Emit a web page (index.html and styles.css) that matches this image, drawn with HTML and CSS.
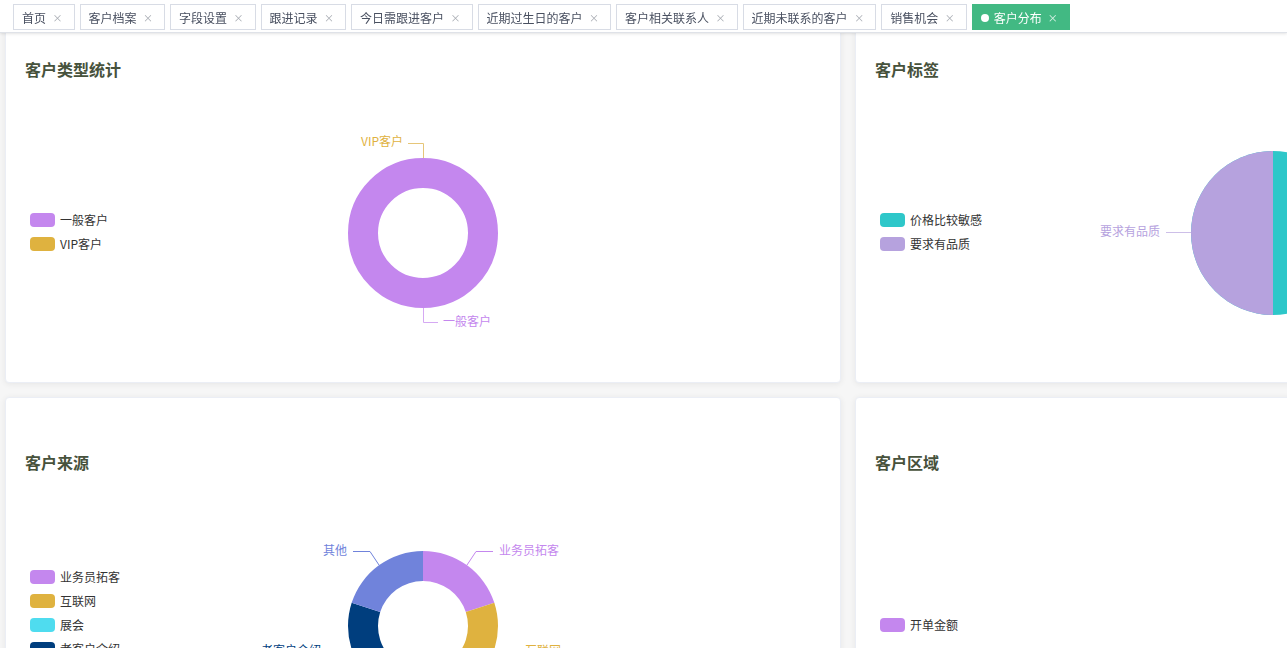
FILE: index.html
```html
<!DOCTYPE html>
<html lang="zh-CN">
<head>
<meta charset="utf-8">
<title>客户分布</title>
<link rel="stylesheet" href="styles.css">
</head>
<body>
<div class="tags-bar">
  <span class="tag">首页<i class="close">×</i></span>
  <span class="tag">客户档案<i class="close">×</i></span>
  <span class="tag">字段设置<i class="close">×</i></span>
  <span class="tag">跟进记录<i class="close">×</i></span>
  <span class="tag">今日需跟进客户<i class="close">×</i></span>
  <span class="tag">近期过生日的客户<i class="close">×</i></span>
  <span class="tag">客户相关联系人<i class="close">×</i></span>
  <span class="tag">近期未联系的客户<i class="close">×</i></span>
  <span class="tag">销售机会<i class="close">×</i></span>
  <span class="tag active"><b class="dot"></b>客户分布<i class="close">×</i></span>
</div>

<main class="main">
  <section class="card">
    <h2 class="card-title">客户类型统计</h2>
    <div class="chart">
      <svg class="chart-svg" viewBox="0 0 834 302" width="834" height="302">
        <circle cx="417" cy="153" r="60" fill="none" stroke="#c487ee" stroke-width="30"/>
        <polyline points="402,63.5 417.5,63.5 417.5,78" fill="none" stroke="#e6c679" stroke-width="1"/>
        <text x="397" y="60.5" text-anchor="end" class="lbl" fill="#dfb23f">VIP客户</text>
        <polyline points="417.5,228 417.5,242.5 432,242.5" fill="none" stroke="#d5a9f3" stroke-width="1"/>
        <text x="437" y="240.5" class="lbl" fill="#c487ee">一般客户</text>
      </svg>
      <ul class="legend">
        <li><span class="sw c-purple"></span>一般客户</li>
        <li><span class="sw c-gold"></span>VIP客户</li>
      </ul>
    </div>
  </section>

  <section class="card">
    <h2 class="card-title">客户标签</h2>
    <div class="chart">
      <svg class="chart-svg" viewBox="0 0 834 302" width="834" height="302">
        <circle cx="417" cy="153" r="82" fill="#2ec7c9"/>
        <path d="M417,71 A82,82 0 0 0 417,235 Z" fill="#b6a2de"/>
        <line x1="310" y1="152.5" x2="335" y2="152.5" stroke="#cdbfe8" stroke-width="1"/>
        <text x="304" y="150.5" text-anchor="end" class="lbl" fill="#b6a2de">要求有品质</text>
      </svg>
      <ul class="legend">
        <li><span class="sw c-teal"></span>价格比较敏感</li>
        <li><span class="sw c-lav"></span>要求有品质</li>
      </ul>
    </div>
  </section>

  <section class="card">
    <h2 class="card-title">客户来源</h2>
    <div class="chart">
      <svg class="chart-svg" viewBox="0 0 834 302" width="834" height="302">
        <path d="M417,78 A75,75 0 0 1 488.33,129.82 L459.80,139.09 A45,45 0 0 0 417,108 Z" fill="#c487ee"/>
        <path d="M488.33,129.82 A75,75 0 0 1 461.08,213.68 L443.45,189.41 A45,45 0 0 0 459.80,139.09 Z" fill="#dfb23f"/>
        <path d="M461.08,213.68 A75,75 0 0 1 372.92,213.68 L390.55,189.41 A45,45 0 0 0 443.45,189.41 Z" fill="#4fdcef"/>
        <path d="M372.92,213.68 A75,75 0 0 1 345.67,129.82 L374.20,139.09 A45,45 0 0 0 390.55,189.41 Z" fill="#003e7e"/>
        <path d="M345.67,129.82 A75,75 0 0 1 417,78 L417,108 A45,45 0 0 0 374.20,139.09 Z" fill="#7083db"/>

        <polyline points="461,92 470,78.5 487,78.5" fill="none" stroke="#c487ee" stroke-width="1"/>
        <text x="493" y="76.5" class="lbl" fill="#c487ee">业务员拓客</text>
        <polyline points="373,92 364,78.5 347,78.5" fill="none" stroke="#7083db" stroke-width="1"/>
        <text x="341" y="76.5" text-anchor="end" class="lbl" fill="#7083db">其他</text>
        <polyline points="488,176 498,178.5 513,178.5" fill="none" stroke="#dfb23f" stroke-width="1"/>
        <text x="519" y="176.5" class="lbl" fill="#dfb23f">互联网</text>
        <polyline points="346,176 336,178.5 321,178.5" fill="none" stroke="#003e7e" stroke-width="1"/>
        <text x="315" y="176.5" text-anchor="end" class="lbl" fill="#003e7e">老客户介绍</text>
        <polyline points="417.5,228 417.5,243 432,243" fill="none" stroke="#4fdcef" stroke-width="1"/>
        <text x="437" y="241.5" class="lbl" fill="#4fdcef">展会</text>
      </svg>
      <ul class="legend">
        <li><span class="sw c-purple"></span>业务员拓客</li>
        <li><span class="sw c-gold"></span>互联网</li>
        <li><span class="sw c-cyan"></span>展会</li>
        <li><span class="sw c-navy"></span>老客户介绍</li>
        <li><span class="sw c-blue"></span>其他</li>
      </ul>
    </div>
  </section>

  <section class="card">
    <h2 class="card-title">客户区域</h2>
    <div class="chart">
      <ul class="legend">
        <li><span class="sw c-purple"></span>开单金额</li>
      </ul>
    </div>
  </section>
</main>
</body>
</html>
```

FILE: styles.css
```css
html, body {
  margin: 0;
  padding: 0;
  overflow: hidden;
  height: 100%;
}
body {
  background: #f6f6f6;
  font-family: "Microsoft YaHei", "Noto Sans CJK SC", sans-serif;
  color: #333;
}

.tags-bar {
  position: fixed;
  top: 0;
  left: 0;
  right: 0;
  z-index: 10;
  height: 33px;
  box-sizing: border-box;
  background: #fff;
  border-bottom: 1px solid #dfe2e8;
  box-shadow: 0 1px 3px 0 rgba(0, 0, 0, 0.10), 0 0 3px 0 rgba(0, 0, 0, 0.04);
  display: flex;
  align-items: flex-start;
  gap: 5px;
  padding: 4px 0 0 13px;
}
.tag {
  display: inline-flex;
  align-items: center;
  height: 26px;
  box-sizing: border-box;
  border: 1px solid #d8dce5;
  background: #fff;
  color: #495060;
  font-size: 12px;
  line-height: 22px;
  padding: 2px 8px 0;
  white-space: nowrap;
}
.tag .close {
  font-style: normal;
  display: inline-block;
  width: 16px;
  margin-left: 3.5px;
  text-align: center;
  font-size: 10px;
  color: #a8acb3;
}
.tag.active {
  background: #42b983;
  border-color: #42b983;
  color: #fff;
}
.tag.active .close {
  margin-left: 3px;
  color: #dff3ea;
}
.dot {
  display: inline-block;
  width: 8px;
  height: 8px;
  border-radius: 50%;
  background: #fff;
  margin-right: 5px;
}

.main {
  display: grid;
  grid-template-columns: 836px 836px;
  grid-auto-rows: 379px;
  gap: 14px;
  padding: 4px 5px;
}
.card {
  background: #fff;
  border: 1px solid #ebeef5;
  border-radius: 4px;
  box-shadow: 0 1px 6px rgba(0, 0, 0, 0.07);
  display: flex;
  flex-direction: column;
  overflow: hidden;
}
.card-title {
  margin: 0 0 1px;
  padding: 54px 19px 0;
  font-size: 16px;
  line-height: 20px;
  height: 20px;
  font-weight: bold;
  color: #47523c;
}
.chart {
  position: relative;
  flex: 1;
  display: flex;
  align-items: center;
  padding-left: 24px;
  padding-top: 1px;
}
.chart-svg {
  position: absolute;
  top: 0;
  left: 0;
}
.lbl {
  font-size: 12px;
  dominant-baseline: central;
  font-family: "Microsoft YaHei", "Noto Sans CJK SC", sans-serif;
}

.legend {
  position: relative;
  list-style: none;
  margin: 0;
  padding: 0;
  display: flex;
  flex-direction: column;
  gap: 10px;
}
.legend li {
  display: flex;
  align-items: center;
  height: 14px;
  font-size: 12px;
  line-height: 14px;
  color: #333;
  white-space: nowrap;
}
.sw {
  display: inline-block;
  width: 25px;
  height: 14px;
  border-radius: 4px;
  margin-right: 5px;
}
.c-purple { background: #c487ee; }
.c-gold { background: #dfb23f; }
.c-teal { background: #2ec7c9; }
.c-lav { background: #b6a2de; }
.c-cyan { background: #4fdcef; }
.c-navy { background: #003e7e; }
.c-blue { background: #7083db; }
```
